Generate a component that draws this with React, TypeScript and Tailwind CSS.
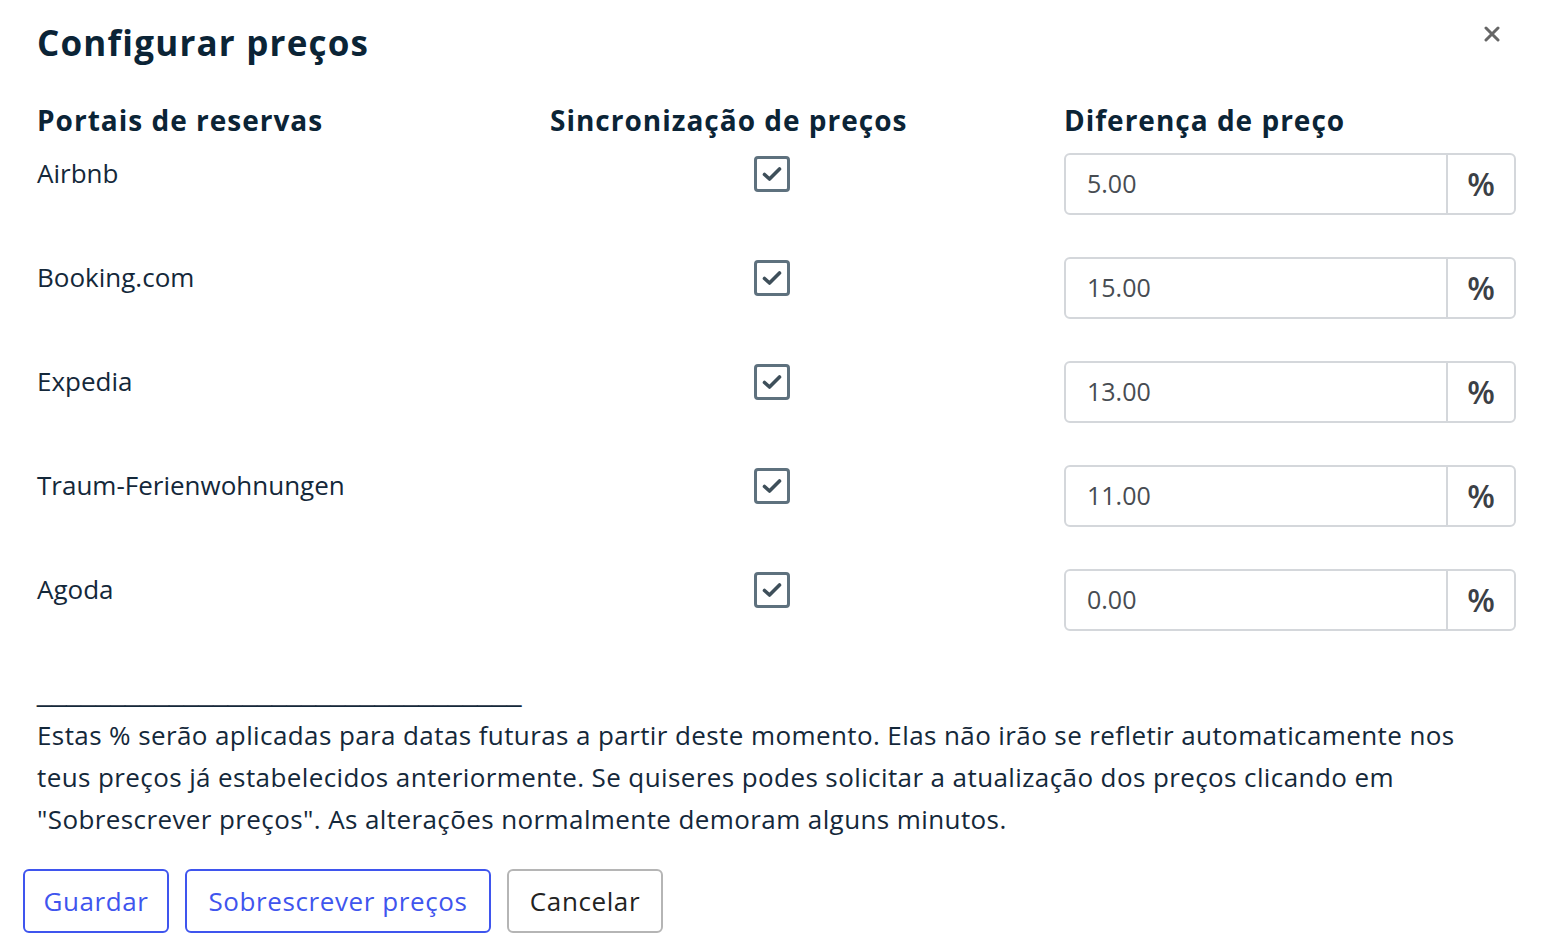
import React from "react";

const portals = [
  { name: "Airbnb", value: "5.00" },
  { name: "Booking.com", value: "15.00" },
  { name: "Expedia", value: "13.00" },
  { name: "Traum-Ferienwohnungen", value: "11.00" },
  { name: "Agoda", value: "0.00" },
];

function CheckBox() {
  return (
    <div className="mt-[3px] ml-[204px] flex h-[36px] w-[36px] items-center justify-center rounded-[4px] border-[3px] border-[#5e717e] bg-white">
      <svg width="22" height="18" viewBox="0 0 22 18" fill="none">
        <path d="M3.5 9.5 L8.5 14 L18.5 4" stroke="#3e4f5a" strokeWidth="3.6" strokeLinecap="round" strokeLinejoin="round" />
      </svg>
    </div>
  );
}

function PercentInput({ value }: { value: string }) {
  return (
    <div className="flex h-[62px] w-[452px] rounded-[6px] border-2 border-[#d4d7db] bg-white">
      <div className="flex flex-1 items-center pl-[21px] text-[25px] text-[#474c52]">{value}</div>
      <div className="flex w-[68px] items-center justify-center border-l-2 border-[#d4d7db] text-[32px] font-semibold text-[#3b4046]">
        %
      </div>
    </div>
  );
}

export default function App() {
  return (
    <div
      className="relative min-h-screen bg-white px-[23px] pt-[21px] text-[#0e2436]"
      style={{ fontFamily: "'Open Sans', 'Liberation Sans', sans-serif" }}
    >
      <button className="absolute right-[64px] top-[26px]" aria-label="Fechar">
        <svg width="16" height="16" viewBox="0 0 16 16">
          <path d="M2 2 L14 14 M14 2 L2 14" stroke="#666" strokeWidth="3" strokeLinecap="round" />
        </svg>
      </button>

      <div className="ml-[14px]">
        <h1 className="text-[35px] font-bold leading-[44px] tracking-[1.2px] text-[#0b2436]">Configurar preços</h1>

        <div className="mt-[38px] grid grid-cols-[513px_514px_452px] text-[28px] font-bold leading-[34px] tracking-[1px] text-[#0b2436]">
          <div>Portais de reservas</div>
          <div>Sincronização de preços</div>
          <div>Diferença de preço</div>
        </div>

        <div className="mt-[16px] flex flex-col gap-[42px]">
          {portals.map((p) => (
            <div key={p.name} className="grid grid-cols-[513px_514px_452px] items-start">
              <div className="text-[26px] leading-[40px] text-[#14283a]">{p.name}</div>
              <div>
                <CheckBox />
              </div>
              <PercentInput value={p.value} />
            </div>
          ))}
        </div>

        <div className="mt-[41px] text-[26px] leading-[42px] text-[#14283a]">
          <div className="text-[26.4px]" style={{ fontFamily: "'Liberation Sans', sans-serif" }}>
            _________________________________
          </div>
          <p className="tracking-[0.4px]">
            Estas % serão aplicadas para datas futuras a partir deste momento. Elas não irão se refletir automaticamente nos
            <br />
            teus preços já estabelecidos anteriormente. Se quiseres podes solicitar a atualização dos preços clicando em
            <br />
            "Sobrescrever preços". As alterações normalmente demoram alguns minutos.
          </p>
        </div>
      </div>

      <div className="mt-[29px] flex gap-[16px] tracking-[0.6px]">
        <button className="h-[64px] w-[146px] rounded-[6px] border-2 border-[#3f55ee] text-[26px] text-[#3f55ee]">
          Guardar
        </button>
        <button className="h-[64px] w-[306px] rounded-[6px] border-2 border-[#3f55ee] text-[26px] text-[#3f55ee]">
          Sobrescrever preços
        </button>
        <button className="h-[64px] w-[156px] rounded-[6px] border-2 border-[#b5b5b5] text-[26px] text-[#222]">
          Cancelar
        </button>
      </div>
    </div>
  );
}
